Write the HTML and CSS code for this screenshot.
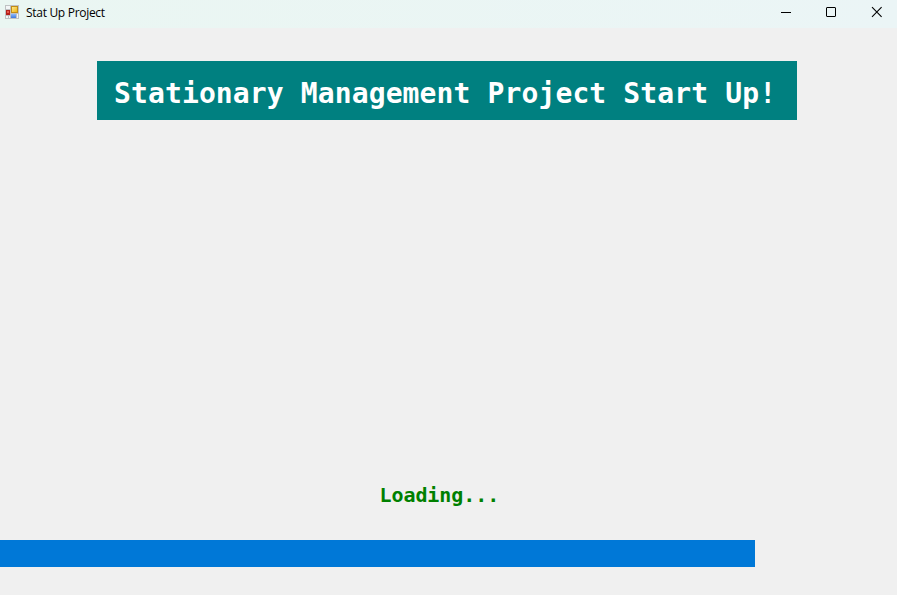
FILE: index.html
```html
<!DOCTYPE html>
<html lang="en">
<head>
<meta charset="utf-8">
<title>Stat Up Project</title>
<link rel="stylesheet" href="styles.css">
</head>
<body>
<div class="window">
  <header class="titlebar">
    <svg class="app-icon" width="14" height="14" viewBox="0 0 14 14" shape-rendering="crispEdges">
      <defs>
        <linearGradient id="gold" x1="0" y1="0" x2="1" y2="1"><stop offset="0" stop-color="#ffe98a"/><stop offset="1" stop-color="#eeb414"/></linearGradient>
        <linearGradient id="blue" x1="0" y1="0" x2="0" y2="1"><stop offset="0" stop-color="#8db8fa"/><stop offset="1" stop-color="#3d78dc"/></linearGradient>
      </defs>
      <path fill="#bfc1c3" d="M0 0h14v14H0z"/>
      <path fill="#f3f5f6" d="M1 1h4v3H1zM1 11h2v2H1zM4 11h1v2H4zM12 9h1v4h-1z"/>
      <path fill="#b5201b" d="M1 5h4v5H1z"/>
      <path fill="#e8584b" d="M2 6h2v2H2z"/>
      <path fill="#c08c18" d="M6 1h7v7H6z"/>
      <path fill="url(#gold)" d="M7 2h5v5H7z"/>
      <path fill="url(#blue)" d="M6 9h5v4H6z"/>
    </svg>
    <span class="title">Stat Up Project</span>
    <div class="controls">
      <svg width="46" height="28" viewBox="0 0 46 28"><path d="M19 12.5h10" stroke="#000" fill="none"/></svg>
      <svg width="46" height="28" viewBox="0 0 46 28"><rect x="18.5" y="7.5" width="9" height="9" rx=".5" stroke="#000" fill="none"/></svg>
      <svg width="43" height="28" viewBox="0 0 43 28"><path d="M18 7.2l9.6 9.6M27.6 7.2L18 16.8" stroke="#000" stroke-width="1.1" fill="none"/></svg>
    </div>
  </header>
  <main class="content">
    <h1 class="banner">Stationary Management Project Start Up!</h1>
    <p class="status">Loading...</p>
    <div class="progress"><div class="progress-fill"></div></div>
  </main>
</div>
</body>
</html>
```
FILE: styles.css
```css
* { box-sizing: border-box; }
body { margin: 0; background: #f0f0f0; }
.window { width: 897px; height: 595px; display: flex; flex-direction: column; overflow: hidden; }
.titlebar {
  height: 28px; flex: none; display: flex; align-items: flex-start; padding-left: 5px;
  background: linear-gradient(90deg, #eaf6f2, #ebf5f6);
}
.app-icon { margin-top: 5px; flex: none; }
.title {
  margin-left: 7px; font: 12px/26px "Open Sans", sans-serif;
  letter-spacing: -0.3px; color: #000; white-space: nowrap;
}
.controls { display: flex; margin-left: auto; }
.controls svg { display: block; }
.content { flex: 1; display: flex; flex-direction: column; background: #f0f0f0; }
.banner, .status { font-family: "DejaVu Sans Mono", monospace; font-weight: bold; white-space: pre; }
.banner {
  width: 700px; height: 59px; margin: 33px 0 0 97px; padding-left: 17px;
  background: #008080; color: #fff; font-size: 28px; line-height: 65px; letter-spacing: 0.12px;
}
.status {
  margin: 360px 0 0 379.5px; height: 30px; color: #008000;
  font-size: 20px; line-height: 31px; letter-spacing: -0.08px;
}
.progress { margin-top: 30px; height: 27px; }
.progress-fill { width: 755px; height: 100%; background: #0078d7; }
```
